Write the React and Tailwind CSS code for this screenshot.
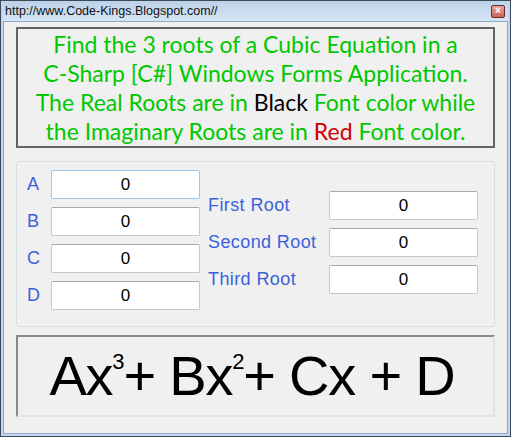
import React from 'react';

const COEFFS = ['A', 'B', 'C', 'D'];
const ROOTS = ['First Root', 'Second Root', 'Third Root'];

function NumBox({ focused }) {
  return (
    <div
      className={`w-[149px] h-[29px] bg-white rounded-[2px] flex items-center justify-center text-[17px] text-black border ${
        focused ? 'border-[#9cc6ec]' : 'border-[#c8c8c8] border-t-[#a9a9a9]'
      }`}
    >
      0
    </div>
  );
}

export default function App() {
  return (
    <div className="w-[511px] h-[437px] bg-[#3a4a5a] p-px" style={{ fontFamily: '"Liberation Sans", Arial, sans-serif' }}>
      <div className="w-full h-full bg-[#c3d8ee] flex flex-col px-[2px] pb-[2px]">
        {/* Title bar */}
        <div className="h-[20px] flex items-center justify-between pl-[2px] pr-[3px] bg-gradient-to-b from-[#bcd2ea] to-[#d6e5f4]">
          <span className="text-[12.5px] text-[#111] leading-none">http://www.Code-Kings.Blogspot.com//</span>
          <div className="w-[14px] h-[13px] rounded-[2px] border border-[#6b2a2a] bg-gradient-to-b from-[#e8a5a0] to-[#c9615a] flex items-center justify-center">
            <span className="text-white text-[10px] font-bold leading-none">×</span>
          </div>
        </div>

        {/* Client area */}
        <div className="flex-1 bg-[#f0f0f0] border border-[#8fa9c4] px-[12px] pt-[5px] flex flex-col">
          {/* Info box */}
          <div
            className="h-[121px] border-2 border-[#646464] flex flex-col items-center justify-center text-[#00c800] text-[23px] leading-[29px]"
            style={{ fontFamily: 'Lato, "Open Sans", sans-serif' }}
          >
            <div>Find the 3 roots of a Cubic Equation in a</div>
            <div>C-Sharp [C#] Windows Forms Application.</div>
            <div>
              The Real Roots are in <span className="text-black">Black</span> Font color while
            </div>
            <div>
              the Imaginary Roots are in <span className="text-[#d00000]">Red</span> Font color.
            </div>
          </div>

          {/* Group box */}
          <div className="mt-[13px] h-[166px] border border-[#d5dfe5] rounded-[3px] flex pl-[10px] pt-[8px]">
            <div className="flex flex-col gap-[8px]">
              {COEFFS.map((c, i) => (
                <div key={c} className="flex items-center">
                  <span className="w-[24px] text-[18px] text-[#3c5fdc]">{c}</span>
                  <NumBox focused={i === 0} />
                </div>
              ))}
            </div>
            <div className="flex flex-col gap-[8px] pt-[21px] ml-[8px]">
              {ROOTS.map((r) => (
                <div key={r} className="flex items-center">
                  <span className="w-[121px] text-[18px] tracking-[0.4px] text-[#3c5fdc]">{r}</span>
                  <NumBox />
                </div>
              ))}
            </div>
          </div>

          {/* Equation box */}
          <div className="mt-[8px] h-[82px] border-2 border-[#8a8a8a] border-r-[#e3e3e3] border-b-[#e3e3e3] flex items-center justify-center text-black text-[56px] tracking-[-1.2px] leading-none pr-[7px]">
            <span>
              Ax<sup className="text-[22px] -top-[26px]">3</sup>+ Bx<sup className="text-[22px] -top-[26px]">2</sup>+ Cx + D
            </span>
          </div>
        </div>
      </div>
    </div>
  );
}
